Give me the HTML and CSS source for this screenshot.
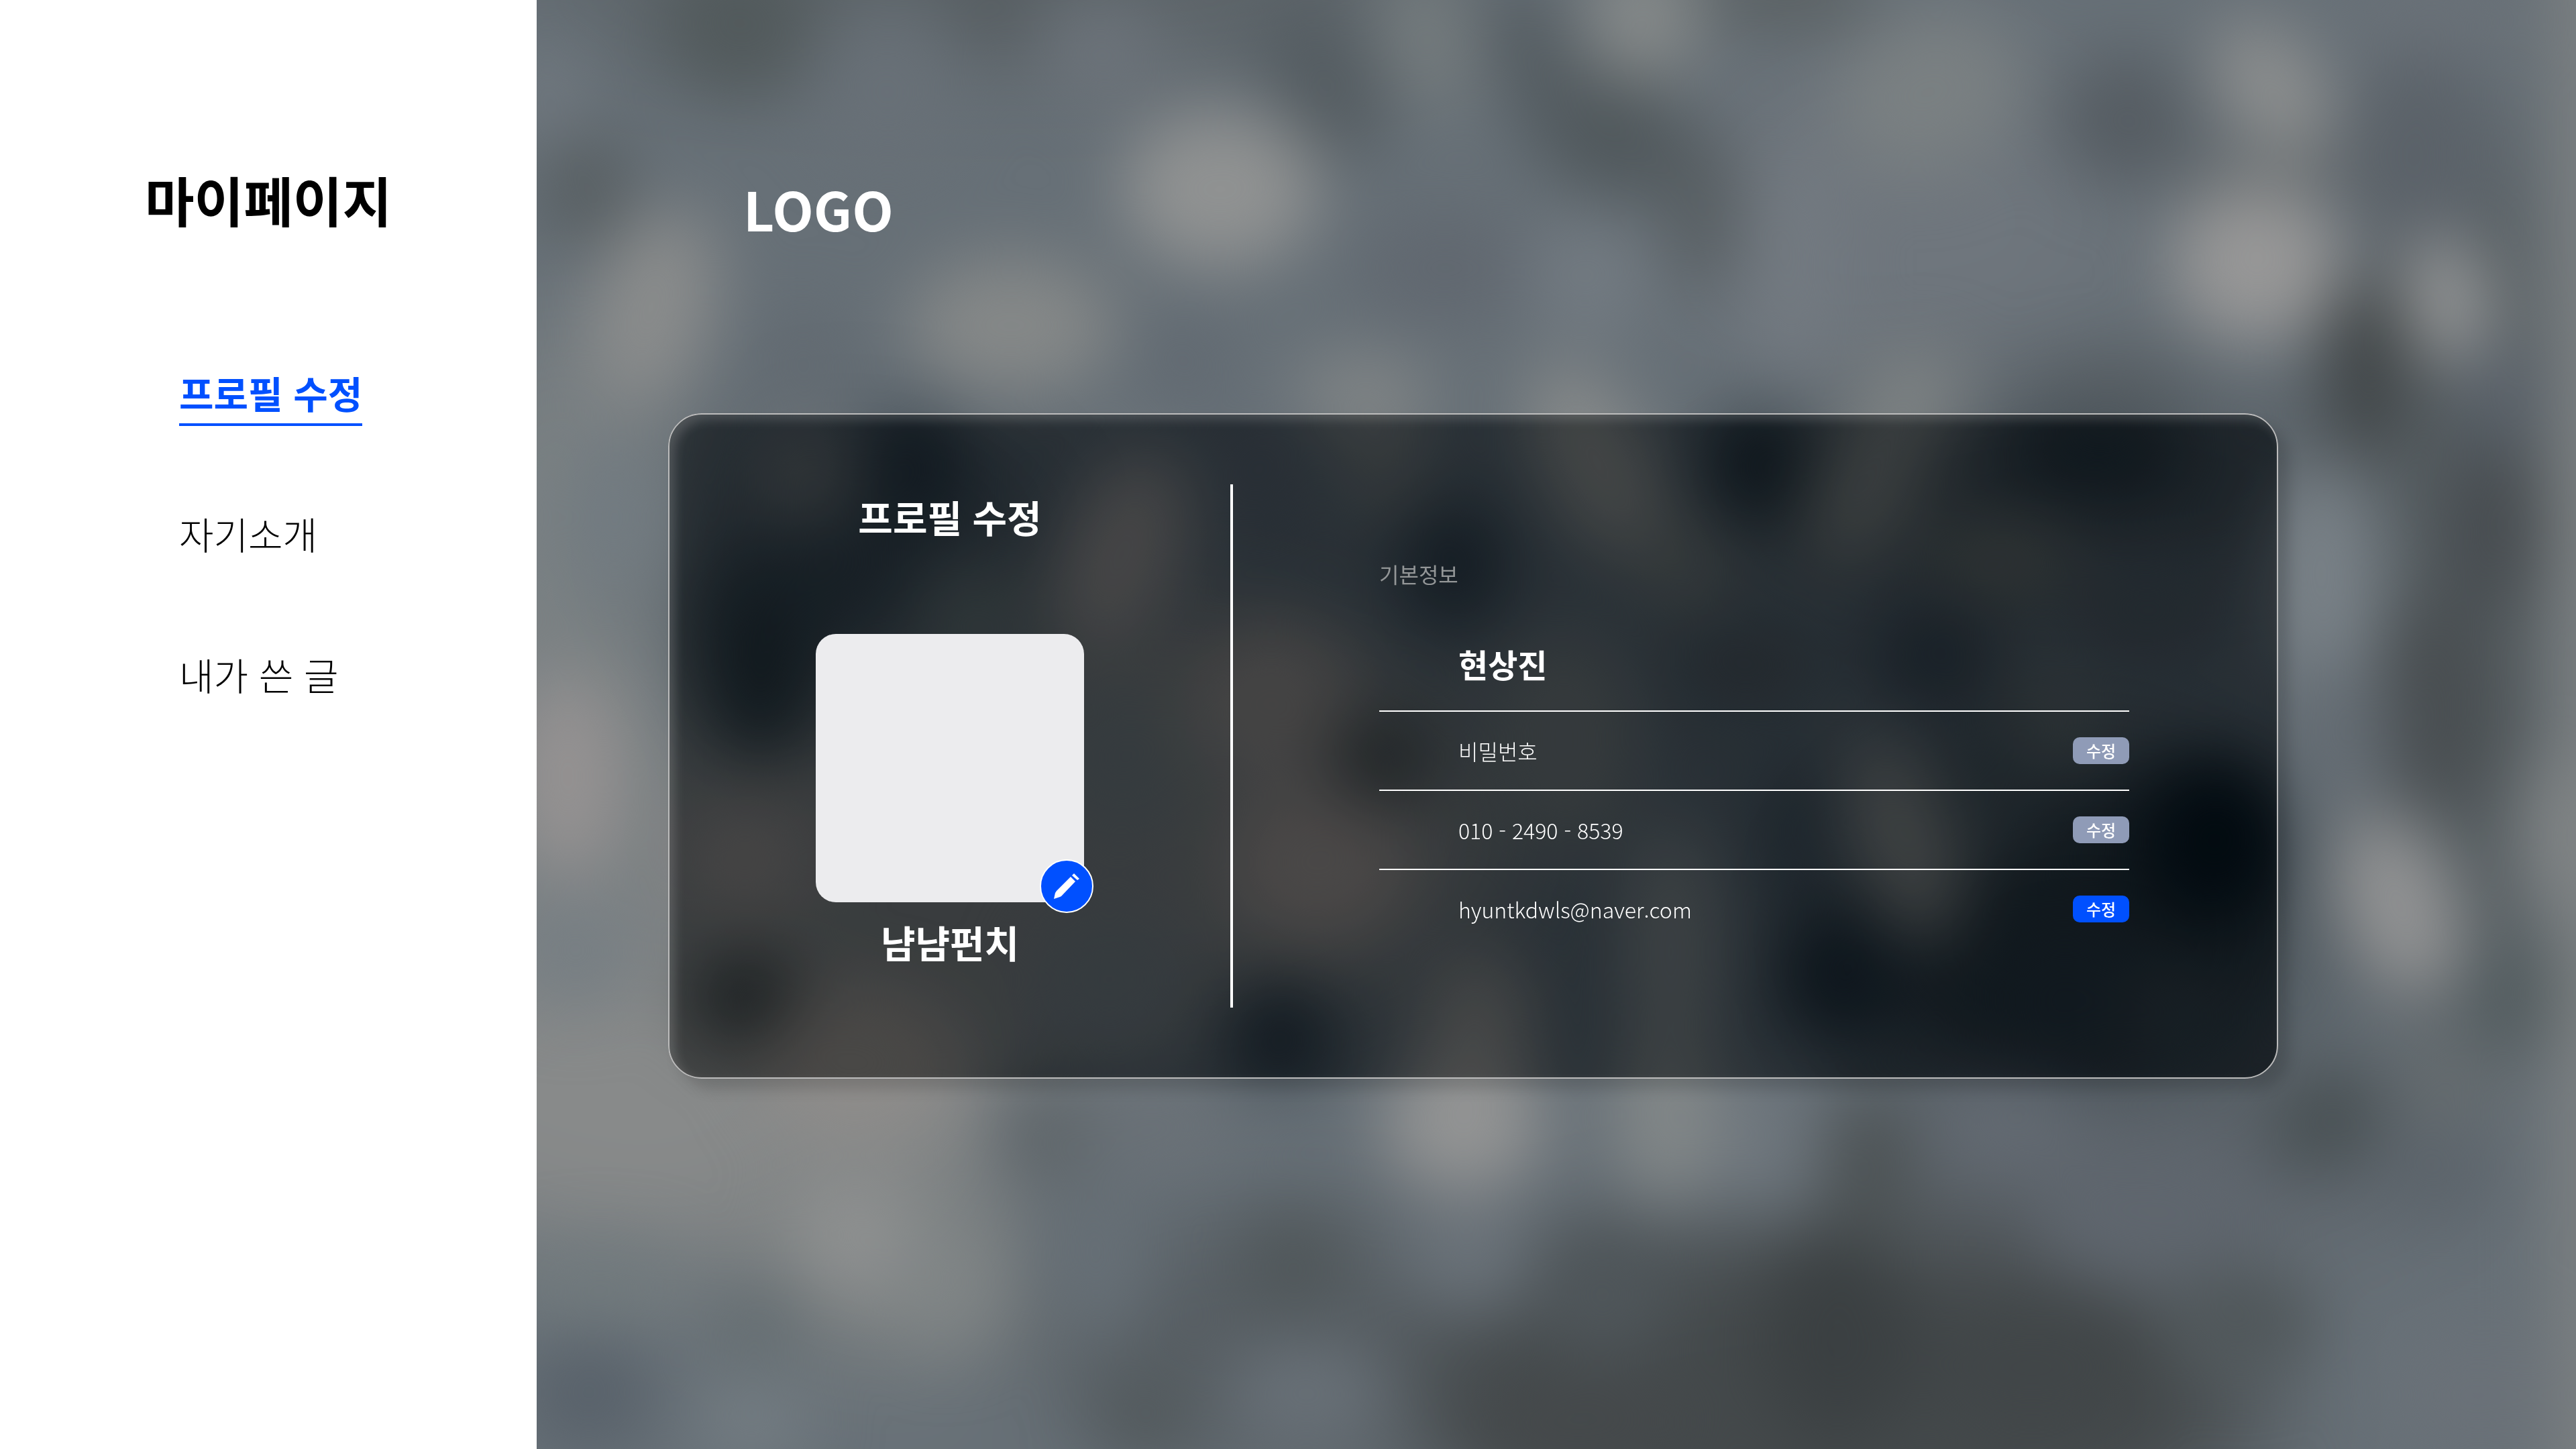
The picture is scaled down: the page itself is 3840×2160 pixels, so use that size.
FILE: index.html
```html
<!DOCTYPE html>
<html lang="ko">
<head>
<meta charset="utf-8">
<title>마이페이지</title>
<link rel="stylesheet" href="styles.css">
</head>
<body>
<div class="layout">
  <aside class="sidebar">
    <h1 class="sidebar-title">마이페이지</h1>
    <nav class="menu">
      <a class="menu-link is-active" href="#profile">프로필 수정</a>
      <a class="menu-link" href="#intro">자기소개</a>
      <a class="menu-link" href="#posts">내가 쓴 글</a>
    </nav>
  </aside>

  <main class="content">
    <svg class="backdrop" viewBox="0 0 1568 1568" preserveAspectRatio="none" aria-hidden="true">
      <defs>
        <filter id="wide" filterUnits="userSpaceOnUse" x="-300" y="-300" width="2168" height="2168" color-interpolation-filters="sRGB">
          <feGaussianBlur stdDeviation="46 64"/>
        </filter>
        <filter id="soft" filterUnits="userSpaceOnUse" x="-300" y="-300" width="2168" height="2168" color-interpolation-filters="sRGB">
          <feGaussianBlur stdDeviation="26 37"/>
        </filter>
      </defs>
      <!-- broad tones -->
      <g filter="url(#wide)">
        <rect x="-300" y="-300" width="2168" height="2168" fill="#677077"/>
        <ellipse color="#5a6165" cx="350" cy="-20" rx="350" ry="70"/>
        <ellipse color="#6f767d" cx="1050" cy="240" rx="150" ry="160"/>
        <ellipse color="#7c8284" cx="20" cy="700" rx="90" ry="340"/>
        <ellipse color="#888a8a" cx="120" cy="1190" rx="250" ry="170"/>
        <ellipse color="#7a7e80" cx="430" cy="900" rx="320" ry="220"/>
        <ellipse color="#7a7f80" cx="270" cy="1370" rx="110" ry="100"/>
        <ellipse color="#5b646b" cx="240" cy="600" rx="150" ry="140"/>
        <ellipse color="#586066" cx="1180" cy="520" rx="240" ry="100"/>
        <ellipse color="#4a5359" cx="1190" cy="1010" rx="180" ry="180"/>
        <ellipse color="#545b5e" cx="1490" cy="650" rx="60" ry="500"/>
        <ellipse color="#575e63" cx="560" cy="1450" rx="170" ry="120"/>
        <ellipse color="#44494b" cx="1000" cy="1520" rx="320" ry="190"/>
        <ellipse color="#5e656c" cx="1250" cy="1260" rx="220" ry="80"/>
      </g>
      <g filter="url(#soft)">
        <!-- upper area -->
        <ellipse color="#525a5c" cx="155" cy="25" rx="50" ry="70"/>
        <ellipse color="#727a81" cx="8" cy="100" rx="16" ry="50"/>
        <ellipse color="#555c5f" cx="38" cy="205" rx="22" ry="50"/>
        <ellipse color="#687077" cx="270" cy="100" rx="50" ry="80"/>
        <ellipse color="#555c60" cx="350" cy="0" rx="22" ry="30"/>
        <ellipse color="#6c737a" cx="435" cy="60" rx="40" ry="50"/>
        <ellipse color="#545c61" cx="605" cy="85" rx="32" ry="80" transform="rotate(-18 605 85)"/>
        <ellipse color="#757c7e" cx="685" cy="40" rx="24" ry="70" transform="rotate(-8 685 40)"/>
        <ellipse color="#535b60" cx="775" cy="90" rx="22" ry="100" transform="rotate(-14 775 90)"/>
        <ellipse color="#868a8a" cx="850" cy="20" rx="34" ry="60"/>
        <ellipse color="#50585c" cx="832" cy="150" rx="38" ry="60"/>
        <ellipse color="#575e62" cx="895" cy="225" rx="20" ry="80"/>
        <ellipse color="#575d5e" cx="960" cy="-5" rx="60" ry="20"/>
        <ellipse color="#909292" cx="525" cy="205" rx="66" ry="76"/>
        <ellipse color="#858888" cx="365" cy="352" rx="70" ry="64"/>
        <ellipse color="#8a8c8c" cx="88" cy="335" rx="38" ry="100" transform="rotate(10 88 335)"/>
        <ellipse color="#626a71" cx="205" cy="390" rx="26" ry="50"/>
        <ellipse color="#616870" cx="698" cy="290" rx="60" ry="50"/>
        <ellipse color="#616971" cx="498" cy="390" rx="22" ry="40"/>
        <ellipse color="#727a81" cx="810" cy="300" rx="40" ry="60"/>
        <ellipse color="#7a8082" cx="1070" cy="100" rx="60" ry="80" transform="rotate(20 1070 100)"/>
        <ellipse color="#737a81" cx="965" cy="290" rx="24" ry="120"/>
        <ellipse color="#555c62" cx="1222" cy="130" rx="42" ry="60"/>
        <ellipse color="#61676a" cx="1340" cy="185" rx="70" ry="12"/>
        <ellipse color="#8d8f8f" cx="1334" cy="95" rx="30" ry="66" transform="rotate(-20 1334 95)"/>
        <ellipse color="#5b6269" cx="1446" cy="165" rx="44" ry="100"/>
        <ellipse color="#6a7178" cx="1460" cy="20" rx="60" ry="30"/>
        <ellipse color="#979797" cx="1322" cy="285" rx="56" ry="76"/>
        <ellipse color="#404547" cx="1408" cy="400" rx="24" ry="90"/>
        <ellipse color="#939596" cx="1468" cy="325" rx="24" ry="60" transform="rotate(-6 1468 325)"/>
        <ellipse color="#59616a" cx="1510" cy="430" rx="20" ry="50"/>
        <!-- right edge -->
        <ellipse color="#7a8288" cx="1372" cy="620" rx="30" ry="110"/>
        <ellipse color="#464b4f" cx="1502" cy="570" rx="24" ry="80"/>
        <ellipse color="#484d50" cx="1462" cy="760" rx="30" ry="110"/>
        <ellipse color="#656d74" cx="1385" cy="800" rx="30" ry="70"/>
        <ellipse color="#929394" cx="1432" cy="980" rx="34" ry="90" transform="rotate(-12 1432 980)"/>
        <ellipse color="#505a5d" cx="1520" cy="1075" rx="22" ry="50"/>
        <ellipse color="#666c6e" cx="1469" cy="1169" rx="24" ry="30"/>
        <ellipse color="#485053" cx="1375" cy="1212" rx="34" ry="50" transform="rotate(20 1375 1212)"/>
        <ellipse color="#5c646b" cx="1460" cy="1270" rx="40" ry="40"/>
        <ellipse color="#909292" cx="1568" cy="905" rx="26" ry="90"/>
        <rect x="1552" y="-200" width="240" height="1900" fill="#7d8182"/>
        <!-- left edge -->
        <ellipse color="#727b81" cx="60" cy="560" rx="30" ry="80"/>
        <ellipse color="#959292" cx="24" cy="840" rx="34" ry="100"/>
        <ellipse color="#767e83" cx="30" cy="1030" rx="36" ry="50"/>
        <!-- middle band -->
        <ellipse color="#73787b" cx="205" cy="515" rx="32" ry="40"/>
        <ellipse color="#4a545c" cx="290" cy="505" rx="28" ry="60"/>
        <ellipse color="#4b555b" cx="172" cy="710" rx="36" ry="100"/>
        <ellipse color="#525c63" cx="230" cy="620" rx="50" ry="50"/>
        <ellipse color="#6d7679" cx="340" cy="680" rx="40" ry="60"/>
        <ellipse color="#8a8a8b" cx="450" cy="600" rx="36" ry="100" transform="rotate(12 450 600)"/>
        <ellipse color="#767d80" cx="450" cy="820" rx="50" ry="80"/>
        <ellipse color="#828687" cx="635" cy="425" rx="44" ry="30"/>
        <ellipse color="#666e76" cx="555" cy="510" rx="24" ry="50"/>
        <ellipse color="#767b7d" cx="650" cy="510" rx="24" ry="40"/>
        <ellipse color="#888787" cx="565" cy="760" rx="56" ry="76"/>
        <ellipse color="#8f8c8b" cx="600" cy="935" rx="62" ry="74"/>
        <ellipse color="#5a6063" cx="650" cy="820" rx="30" ry="40"/>
        <ellipse color="#4e5860" cx="705" cy="610" rx="32" ry="60"/>
        <ellipse color="#757b7e" cx="790" cy="800" rx="50" ry="110"/>
        <ellipse color="#888b8b" cx="815" cy="500" rx="32" ry="100" transform="rotate(-18 815 500)"/>
        <ellipse color="#757b7c" cx="880" cy="610" rx="28" ry="40"/>
        <ellipse color="#465057" cx="940" cy="500" rx="30" ry="56"/>
        <ellipse color="#808586" cx="1060" cy="420" rx="34" ry="30"/>
        <ellipse color="#7c8182" cx="1025" cy="520" rx="32" ry="90" transform="rotate(18 1025 520)"/>
        <ellipse color="#465057" cx="1200" cy="490" rx="60" ry="34"/>
        <ellipse color="#565d62" cx="1210" cy="425" rx="50" ry="24"/>
        <ellipse color="#6d7374" cx="1125" cy="605" rx="50" ry="36"/>
        <ellipse color="#5f676e" cx="1240" cy="660" rx="50" ry="46"/>
        <ellipse color="#535c64" cx="1075" cy="710" rx="40" ry="50"/>
        <ellipse color="#5f676d" cx="930" cy="720" rx="50" ry="40"/>
        <ellipse color="#6b7275" cx="1160" cy="780" rx="40" ry="40"/>
        <ellipse color="#5b646a" cx="1120" cy="860" rx="30" ry="70"/>
        <ellipse color="#828687" cx="1050" cy="910" rx="28" ry="100" transform="rotate(-12 1050 910)"/>
        <ellipse color="#58626a" cx="975" cy="900" rx="22" ry="70"/>
        <ellipse color="#39434a" cx="1290" cy="910" rx="48" ry="80"/>
        <ellipse color="#465058" cx="1005" cy="1055" rx="40" ry="60"/>
        <ellipse color="#4b545b" cx="1175" cy="1080" rx="60" ry="80"/>
        <ellipse color="#535c62" cx="1260" cy="1100" rx="30" ry="50"/>
        <ellipse color="#7e8487" cx="872" cy="1030" rx="28" ry="130"/>
        <ellipse color="#888787" cx="160" cy="930" rx="46" ry="60"/>
        <ellipse color="#555b5d" cx="162" cy="1080" rx="34" ry="40"/>
        <ellipse color="#8e8c8a" cx="245" cy="1150" rx="66" ry="70"/>
        <ellipse color="#767d81" cx="440" cy="1060" rx="50" ry="70"/>
        <ellipse color="#4c565e" cx="572" cy="1125" rx="34" ry="52"/>
        <!-- lower area -->
        <ellipse color="#888a8a" cx="722" cy="1110" rx="34" ry="70"/>
        <ellipse color="#939494" cx="712" cy="1215" rx="52" ry="64"/>
        <ellipse color="#828788" cx="870" cy="1210" rx="34" ry="80"/>
        <ellipse color="#6e767d" cx="945" cy="1230" rx="28" ry="60"/>
        <ellipse color="#5e6569" cx="392" cy="1230" rx="28" ry="46"/>
        <ellipse color="#6a7177" cx="480" cy="1220" rx="50" ry="40"/>
        <ellipse color="#8e9090" cx="252" cy="1340" rx="46" ry="66" transform="rotate(-20 252 1340)"/>
        <ellipse color="#808586" cx="312" cy="1390" rx="34" ry="60"/>
        <ellipse color="#646d71" cx="168" cy="1440" rx="24" ry="36"/>
        <ellipse color="#717a7d" cx="50" cy="1390" rx="60" ry="30"/>
        <ellipse color="#58616a" cx="40" cy="1510" rx="40" ry="50"/>
        <ellipse color="#747d83" cx="165" cy="1540" rx="36" ry="36"/>
        <ellipse color="#666f76" cx="430" cy="1360" rx="30" ry="80"/>
        <ellipse color="#50575a" cx="582" cy="1370" rx="36" ry="50"/>
        <ellipse color="#52595c" cx="468" cy="1530" rx="30" ry="40"/>
        <ellipse color="#6a7279" cx="715" cy="1350" rx="36" ry="50"/>
        <ellipse color="#687077" cx="592" cy="1510" rx="52" ry="50"/>
        <ellipse color="#646b73" cx="1130" cy="1215" rx="50" ry="40"/>
        <ellipse color="#5f666e" cx="1240" cy="1310" rx="80" ry="60"/>
        <ellipse color="#4f565a" cx="820" cy="1400" rx="40" ry="60"/>
        <ellipse color="#45494b" cx="800" cy="1540" rx="80" ry="40"/>
        <ellipse color="#4c5254" cx="1025" cy="1270" rx="24" ry="80"/>
        <ellipse color="#3b4042" cx="1000" cy="1450" rx="50" ry="100"/>
        <ellipse color="#414648" cx="1150" cy="1480" rx="80" ry="56"/>
        <ellipse color="#50575a" cx="1310" cy="1430" rx="50" ry="46"/>
        <ellipse color="#6a7178" cx="1490" cy="1510" rx="60" ry="70"/>
      </g>
    </svg>

    <header class="brand">LOGO</header>

    <section class="card" id="profile">
      <div class="profile">
        <h2 class="profile-title">프로필 수정</h2>
        <div class="avatar">
          <button class="avatar-edit" type="button" aria-label="사진 변경">
            <svg class="avatar-icon" viewBox="0 0 38 38" aria-hidden="true">
              <path fill="#fff" d="M25 5 32 12 11 34 9 35 0 38 2 29 4 26z"/>
              <path fill="#fff" d="M27 3 30 0 38 8 35 10z"/>
            </svg>
          </button>
        </div>
        <p class="nickname">냠냠펀치</p>
      </div>
      <div class="info">
        <h3 class="info-label">기본정보</h3>
        <p class="info-name">현상진</p>
        <ul class="info-list">
          <li class="info-row"><span>비밀번호</span><button class="edit" type="button">수정</button></li>
          <li class="info-row"><span>010 - 2490 - 8539</span><button class="edit" type="button">수정</button></li>
          <li class="info-row"><span>hyuntkdwls@naver.com</span><button class="edit is-primary" type="button">수정</button></li>
        </ul>
      </div>
    </section>
  </main>
</div>
</body>
</html>
```
FILE: styles.css
```css
:root {
  --blue: #0050ff;
  --muted-blue: #8f9bb7;
}

* {
  box-sizing: border-box;
  margin: 0;
  padding: 0;
}

body {
  font-family: "Noto Sans CJK KR", sans-serif;
  color: #000;
  background: #fff;
}

.layout {
  display: grid;
  grid-template-columns: 5fr 19fr;
  min-height: 100vh;
}

/* Sidebar */
.sidebar {
  padding-top: 238px;
  background: #fff;
}

.sidebar-title {
  font-size: 80px;
  line-height: 116px;
  font-weight: 700;
  text-align: center;
}

.menu {
  display: flex;
  flex-direction: column;
  align-items: flex-start;
  gap: 120px;
  margin-top: 191px;
  padding-left: 267px;
}

.menu-link {
  padding-bottom: 6px;
  border-bottom: 4px solid transparent;
  font-size: 56px;
  line-height: 80px;
  font-weight: 300;
  color: #000;
  text-decoration: none;
}

.menu-link.is-active {
  border-color: var(--blue);
  font-weight: 700;
  color: var(--blue);
}

/* Main area */
.content {
  position: relative;
  padding: 252px 444px 252px 196px;
  overflow: hidden;
}

.backdrop {
  position: absolute;
  inset: 0;
  width: 100%;
  height: 100%;
}

.backdrop ellipse {
  fill: currentColor;
  stroke: currentColor;
  stroke-width: 20px;
}

.brand {
  position: relative;
  padding-left: 112px;
  font-size: 80px;
  line-height: 116px;
  font-weight: 700;
  color: #fff;
}

/* Card */
.card {
  position: relative;
  display: flex;
  margin-top: 248px;
  padding: 104px 0;
  border: 2px solid #bcbcbc;
  border-radius: 50px;
  color: #fff;
  backdrop-filter: contrast(1.74) brightness(0.48);
  box-shadow: 16px 16px 20px rgba(0, 0, 0, 0.15), inset 8px 8px 16px rgba(255, 255, 255, 0.16);
}

.profile {
  display: flex;
  flex-direction: column;
  align-items: center;
  width: 840px;
  padding: 8px 0 58px;
  border-right: 4px solid #fff;
}

.profile-title,
.nickname {
  font-size: 56px;
  line-height: 80px;
  font-weight: 700;
}

.avatar {
  position: relative;
  width: 400px;
  height: 400px;
  margin: 135px 0 19px;
  border-radius: 30px;
  background: #ececee;
}

.avatar-edit {
  position: absolute;
  right: -14px;
  bottom: -16px;
  display: flex;
  align-items: center;
  justify-content: center;
  width: 80px;
  height: 80px;
  border: 2px solid #fff;
  border-radius: 50%;
  background: var(--blue);
}

.avatar-icon {
  width: 38px;
  height: 38px;
}

.info {
  flex: 1;
  padding: 110px 220px 0 218px;
}

.info-label {
  font-size: 32px;
  line-height: 46px;
  font-weight: 400;
  color: #939697;
}

.info-name {
  margin-top: 76px;
  padding: 0 0 35px 118px;
  border-bottom: 2px solid #fff;
  font-size: 48px;
  line-height: 70px;
  font-weight: 700;
}

.info-list {
  list-style: none;
}

.info-row {
  display: flex;
  align-items: center;
  justify-content: space-between;
  height: 118px;
  padding-left: 118px;
  border-bottom: 2px solid #fff;
  font-size: 32px;
  line-height: 46px;
  font-weight: 300;
}

.info-row:last-child {
  border-bottom-color: transparent;
}

.edit {
  width: 84px;
  height: 40px;
  border: 0;
  border-radius: 10px;
  background: var(--muted-blue);
  font-family: inherit;
  font-size: 24px;
  line-height: 40px;
  font-weight: 500;
  color: #fff;
}

.edit.is-primary {
  background: var(--blue);
}
```
